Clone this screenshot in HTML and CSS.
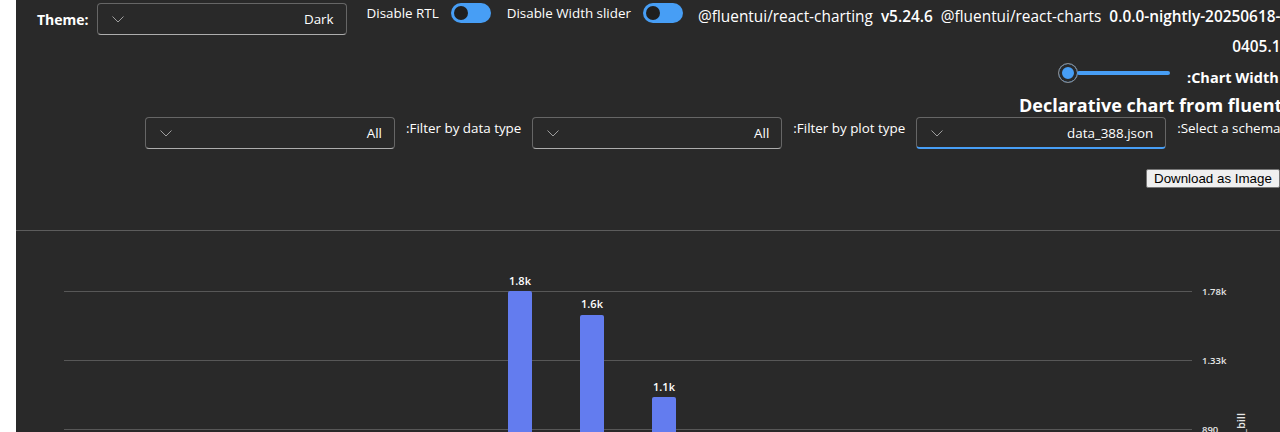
FILE: index.html
```html
<!DOCTYPE html>
<html lang="en">

<head>
  <meta charset="UTF-8" />
  <meta name="viewport" content="width=device-width, initial-scale=1.0" />
  <title>Declarative chart from fluentui</title>
  <link rel="stylesheet" href="styles.css">
</head>

<body>
  <div class="page">
    <div class="top-row">
      <div class="theme-field">
        <span class="theme-label">Theme:</span>
        <div class="dropdown">
          <svg class="chevron" width="12" height="12" viewBox="0 0 12 12"><path d="M0.5 3.5 L6 9 L11.5 3.5" /></svg>
          <span>Dark</span>
        </div>
      </div>
      <div class="switch-field">
        <span>Disable RTL</span>
        <span class="toggle"><span class="knob"></span></span>
      </div>
      <div class="switch-field second">
        <span>Disable Width slider</span>
        <span class="toggle"><span class="knob"></span></span>
      </div>
      <div class="versions">
        <div>@fluentui/react-charting&nbsp; <b>v5.24.6</b>&nbsp; @fluentui/react-charts&nbsp; <b>0.0.0-nightly-20250618-</b></div>
        <div class="version-end"><b>0405.1</b></div>
      </div>
    </div>

    <div class="width-row">
      <div class="slider">
        <span class="thumb"></span>
        <span class="rail"></span>
      </div>
      <span class="width-label">:Chart Width</span>
    </div>

    <h2 class="title">Declarative chart from fluentui</h2>

    <div class="filter-row">
      <div class="dropdown">
        <svg class="chevron" width="12" height="12" viewBox="0 0 12 12"><path d="M0.5 3.5 L6 9 L11.5 3.5" /></svg>
        <span>All</span>
      </div>
      <span class="filter-label">:Filter by data type</span>
      <div class="dropdown">
        <svg class="chevron" width="12" height="12" viewBox="0 0 12 12"><path d="M0.5 3.5 L6 9 L11.5 3.5" /></svg>
        <span>All</span>
      </div>
      <span class="filter-label">:Filter by plot type</span>
      <div class="dropdown focused">
        <svg class="chevron" width="12" height="12" viewBox="0 0 12 12"><path d="M0.5 3.5 L6 9 L11.5 3.5" /></svg>
        <span>data_388.json</span>
      </div>
      <span class="filter-label">:Select a schema</span>
    </div>

    <div class="download-row">
      <button class="download">Download as Image</button>
    </div>

    <hr class="divider">

    <!-- Chart -->
    <svg class="chart" width="1264" height="201" viewBox="0 0 1264 201">
      <g class="grid">
        <line x1="48" y1="60.5" x2="1176" y2="60.5" />
        <line x1="48" y1="129.5" x2="1176" y2="129.5" />
        <line x1="48" y1="198.5" x2="1176" y2="198.5" />
      </g>
      <g class="ticks">
        <text x="1186" y="64">1.78k</text>
        <text x="1186" y="133">1.33k</text>
        <text x="1186" y="202">890</text>
      </g>
      <g class="bars">
        <path d="M492 62 a2 2 0 0 1 2 -2 h20 a2 2 0 0 1 2 2 V201 H492 Z" />
        <path d="M564 86 a2 2 0 0 1 2 -2 h20 a2 2 0 0 1 2 2 V201 H564 Z" />
        <path d="M636 168 a2 2 0 0 1 2 -2 h20 a2 2 0 0 1 2 2 V201 H636 Z" />
      </g>
      <g class="bar-labels">
        <text x="504" y="54">1.8k</text>
        <text x="576" y="77">1.6k</text>
        <text x="648" y="160">1.1k</text>
      </g>
      <text class="axis-title" x="1229" y="182" transform="rotate(-90 1229 182)">sum of total_bill</text>
    </svg>
  </div>
</body>

</html>
```

FILE: styles.css
```css
body {
  margin: 0;
  background-color: #fff;
  font-family: "Open Sans", "Noto Sans", sans-serif;
  font-size: 13.4px;
  overflow: hidden;
}

.page {
  margin-left: 16px;
  height: 432px;
  background-color: #292929;
  color: #fff;
  overflow: hidden;
}

/* Linha de cima */
.top-row {
  display: flex;
  align-items: flex-start;
  padding: 3px 0 0 21px;
  white-space: nowrap;
}

.theme-field {
  display: flex;
  align-items: center;
  gap: 8px;
  flex-shrink: 0;
}

.theme-label {
  font-weight: 700;
  font-size: 14px;
}

.dropdown {
  box-sizing: border-box;
  flex-shrink: 0;
  display: flex;
  align-items: center;
  justify-content: space-between;
  width: 250px;
  height: 32px;
  padding: 0 12px 0 14px;
  border: 1px solid #666;
  border-bottom-color: #adadad;
  border-radius: 4px;
  background-color: #292929;
}

.dropdown.focused {
  border-bottom: 2px solid #479ef5;
}

.chevron path {
  fill: none;
  stroke: #9e9e9e;
  stroke-width: 1;
}

.switch-field {
  display: flex;
  align-items: center;
  flex-shrink: 0;
  gap: 12px;
  height: 20px;
  margin-left: 20px;
}

.switch-field.second {
  margin-left: 16px;
}

.toggle {
  display: flex;
  align-items: center;
  width: 40px;
  height: 20px;
  border-radius: 10px;
  background-color: #479ef5;
  box-sizing: border-box;
  padding-left: 3px;
}

.knob {
  width: 14px;
  height: 14px;
  border-radius: 50%;
  background-color: #1f1f1f;
}

.versions {
  flex: 1;
  margin: -1px 0 0 15px;
  font-size: 15.4px;
  line-height: 30px;
}

.versions b {
  font-weight: 600;
}

.version-end {
  text-align: right;
}

/* Slider */
.width-row {
  display: flex;
  align-items: flex-start;
  padding-left: 1042px;
  margin-top: 1px;
  white-space: nowrap;
}

.slider {
  display: flex;
  align-items: center;
  flex-shrink: 0;
  width: 112px;
  height: 20px;
}

.thumb {
  box-sizing: border-box;
  width: 20px;
  height: 20px;
  border-radius: 50%;
  border: 1px solid #8a8a8a;
  background-color: #479ef5;
  box-shadow: inset 0 0 0 3px #292929;
}

.rail {
  flex: 1;
  height: 4px;
  margin-left: -1px;
  border-radius: 2px;
  background-color: #479ef5;
}

.width-label {
  margin: 5px 0 0 17px;
  line-height: 20px;
  font-size: 14.5px;
  font-weight: 700;
}

.title {
  margin: 5px 0 0;
  padding-left: 1003px;
  font-size: 18px;
  line-height: 24px;
  font-weight: 700;
  white-space: nowrap;
}

/* Filtros */
.filter-row {
  display: flex;
  align-items: flex-start;
  padding-left: 129px;
  white-space: nowrap;
}

.filter-label {
  flex-shrink: 0;
  margin: 1px 11px 0 11px;
  line-height: 20px;
}

.download-row {
  padding: 20px 0 0 1130px;
  white-space: nowrap;
}

.download {
  font-family: "Liberation Sans", Arial, sans-serif;
  font-size: 13.33px;
  padding: 1px 7px;
  background-color: #efefef;
  color: #000;
  border: 1px solid #767676;
  border-radius: 2px;
  white-space: nowrap;
}

.divider {
  margin: 42px 0 0 -16px;
  border: 0;
  border-top: 1px solid #5c5c5c;
}

/* Grafico */
.chart {
  display: block;
  font-family: "Open Sans", "Noto Sans", sans-serif;
}

.grid line {
  stroke: #575757;
  stroke-width: 1;
}

.ticks text {
  fill: #e6e6e6;
  font-size: 9.5px;
  font-weight: 600;
}

.bars path {
  fill: #637cef;
}

.bar-labels text {
  fill: #fff;
  font-size: 11px;
  font-weight: 600;
  text-anchor: middle;
}

.axis-title {
  fill: #e6e6e6;
  font-size: 11px;
  font-weight: 600;
  text-anchor: end;
}
```
